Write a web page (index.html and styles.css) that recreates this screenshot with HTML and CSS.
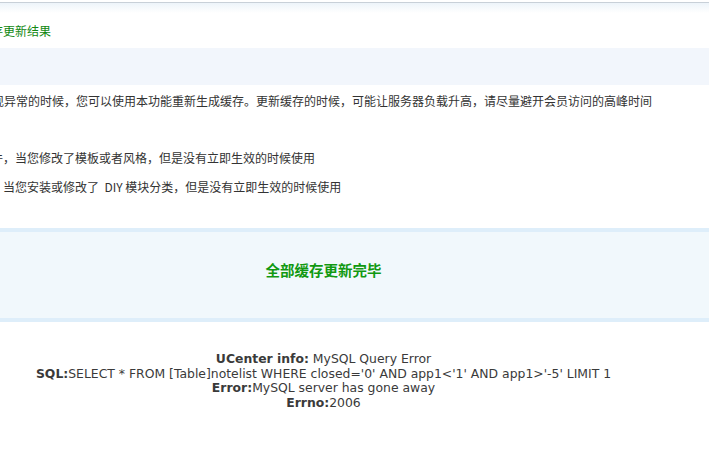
FILE: index.html
```html
<!DOCTYPE html>
<html>
<head>
<meta charset="utf-8">
<link rel="stylesheet" href="styles.css">
</head>
<body>
<div class="page">
  <div class="topline"></div>
  <div class="title">存更新结果</div>
  <div class="band"></div>
  <ul class="tips">
    <li>现异常的时候，您可以使用本功能重新生成缓存。更新缓存的时候，可能让服务器负载升高，请尽量避开会员访问的高峰时间</li>
    <li></li>
    <li>件，当您修改了模板或者风格，但是没有立即生效的时候使用</li>
    <li>，当您安装或修改了&nbsp; DIY 模块分类，但是没有立即生效的时候使用</li>
  </ul>
  <div class="infobox">
    <h4 class="infotitle">全部缓存更新完毕</h4>
  </div>
  <div class="error">
    <div><b>UCenter info:</b> MySQL Query Error</div>
    <div><b>SQL:</b>SELECT * FROM [Table]notelist WHERE closed='0' AND app1&lt;'1' AND app1&gt;'-5' LIMIT 1</div>
    <div><b>Error:</b>MySQL server has gone away</div>
    <div><b>Errno:</b>2006</div>
  </div>
</div>
</body>
</html>
```

FILE: styles.css
```css
html, body {
  margin: 0;
  padding: 0;
  background: #fff;
  overflow: hidden;
}
body {
  font-family: "Noto Sans CJK SC", sans-serif;
  font-size: 12px;
  color: #333;
}
.page {
  margin-left: -62px;
  width: 771px;
}
.topline {
  margin-top: 2px;
  height: 10px;
  border-top: 1px solid #c8d0d8;
  background: linear-gradient(#edf4fa, #ffffff);
}
.title {
  height: 35px;
  line-height: 35px;
  padding-left: 53px;
  color: #118811;
}
.band {
  height: 37px;
  background: #f2f6fc;
}
.tips {
  list-style: none;
  margin: 0;
  padding: 2px 0 0 54px;
}
.tips li {
  height: 28.5px;
  line-height: 28.5px;
  white-space: nowrap;
}
.tips li:nth-child(3),
.tips li:nth-child(4) {
  margin-left: -1px;
}
.infobox {
  margin-top: 27px;
  border-top: 4px solid #deeefa;
  border-bottom: 4px solid #deeefa;
  background: #f1f8fc;
  height: 86px;
  text-align: center;
}
.infotitle {
  margin: 0;
  padding-top: 28px;
  font-size: 14.5px;
  line-height: 20px;
  font-weight: bold;
  color: #119911;
}
.error {
  margin-top: 30px;
  text-align: center;
  font-family: "DejaVu Sans", sans-serif;
  font-size: 12.4px;
  line-height: 14.7px;
  color: #3a3a3a;
}
.error b {
  font-weight: bold;
}
```
